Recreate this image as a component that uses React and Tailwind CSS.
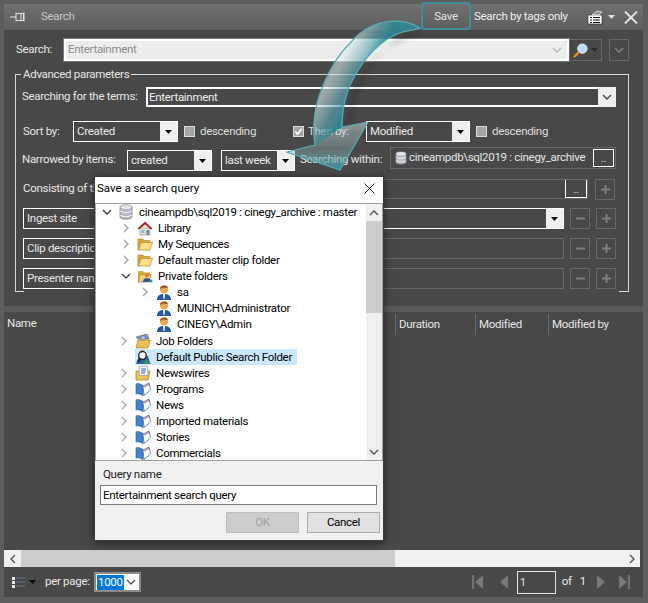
const font = { fontFamily: 'Roboto, "Liberation Sans", sans-serif' };

const treeRows = [
  { label: 'cineampdb\\sql2019 : cinegy_archive : master', level: 'pl-[6px]', chevron: 'down', icon: 'db' },
  { label: 'Library', level: 'pl-[25px]', chevron: 'right', icon: 'home' },
  { label: 'My Sequences', level: 'pl-[25px]', chevron: 'right', icon: 'folder' },
  { label: 'Default master clip folder', level: 'pl-[25px]', chevron: 'right', icon: 'folder' },
  { label: 'Private folders', level: 'pl-[25px]', chevron: 'down', icon: 'private' },
  { label: 'sa', level: 'pl-[44px]', chevron: 'right', icon: 'user' },
  { label: 'MUNICH\\Administrator', level: 'pl-[44px]', icon: 'user' },
  { label: 'CINEGY\\Admin', level: 'pl-[44px]', icon: 'user' },
  { label: 'Job Folders', level: 'pl-[23px] mt-px', chevron: 'right', icon: 'job' },
  { label: 'Default Public Search Folder', level: 'pl-[23px]', icon: 'search', selected: true },
  { label: 'Newswires', level: 'pl-[23px]', chevron: 'right', icon: 'news' },
  { label: 'Programs', level: 'pl-[23px]', chevron: 'right', icon: 'book' },
  { label: 'News', level: 'pl-[23px]', chevron: 'right', icon: 'book' },
  { label: 'Imported materials', level: 'pl-[23px]', chevron: 'right', icon: 'book' },
  { label: 'Stories', level: 'pl-[23px]', chevron: 'right', icon: 'book' },
  { label: 'Commercials', level: 'pl-[23px]', chevron: 'right', icon: 'book' },
];

const Chevron = ({ dir = 'down', color = '#555', className = '' }) => (
  <svg viewBox="0 0 10 10" className={`w-[10px] h-[10px] ${className}`} fill="none" stroke={color} strokeWidth="1.4">
    {dir === 'down' && <path d="M1 3l4 4 4-4" />}
    {dir === 'right' && <path d="M3 1l4 4-4 4" />}
    {dir === 'up' && <path d="M1 7l4-4 4 4" />}
    {dir === 'left' && <path d="M7 1L3 5l4 4" />}
  </svg>
);

const DbIcon = ({ className = 'w-[14px] h-[16px]' }) => (
  <svg viewBox="0 0 14 16" className={className}>
    <path d="M1 3c0-3 12-3 12 0v10c0 3-12 3-12 0z" fill="#b9b9c4" stroke="#77777f" strokeWidth=".7" />
    <ellipse cx="7" cy="3" rx="5.5" ry="2" fill="#e4e4ea" />
    <path d="M1 7c2 2 10 2 12 0M1 11c2 2 10 2 12 0" fill="none" stroke="#f2f2f5" strokeWidth="1" />
  </svg>
);

const FolderIcon = () => (
  <svg viewBox="0 0 16 16" className="w-4 h-4">
    <path d="M1 3h5l1 1.500h6v2H4l-2 7.500H1z" fill="#d9a93c" stroke="#a67c1e" strokeWidth=".6" />
    <path d="M4 6.500h11.500L13 14H1.500z" fill="#fbdf8b" stroke="#b58a26" strokeWidth=".7" />
  </svg>
);

const UserIcon = ({ className = 'w-4 h-4' }) => (
  <svg viewBox="0 0 16 16" className={className}>
    <path d="M1 16c0-5 3-6 7-6s7 1 7 6z" fill="#2a5aa8" />
    <path d="M7 10h2l-.4 5h-1.200z" fill="#e6eefa" />
    <circle cx="8" cy="5.500" r="4" fill="#eda24e" />
    <path d="M4 5c0-4 7-5 8-1-2-.5-5-1-8 1z" fill="#8a4a12" />
  </svg>
);

const BookIcon = () => (
  <svg viewBox="0 0 16 16" className="w-4 h-4">
    <path d="M1 3c2-1 5-.5 7 2v10c-2-2-5-2.500-7-2z" fill="#3f86cf" stroke="#2a5d9c" strokeWidth=".6" />
    <path d="M8 5l6-3 1.500 7L9 14.500z" fill="#fff" stroke="#3b6aa8" strokeWidth=".8" />
    <path d="M9 6l5-2.500" stroke="#b5404a" strokeWidth=".9" />
  </svg>
);

const TreeIcon = ({ name }) => {
  if (name === 'db') return <DbIcon />;
  if (name === 'folder') return <FolderIcon />;
  if (name === 'user') return <UserIcon />;
  if (name === 'book') return <BookIcon />;
  if (name === 'home')
    return (
      <svg viewBox="0 0 16 16" className="w-4 h-4">
        <path d="M3 8h10v7H3z" fill="#e9e3d4" stroke="#8e8a7d" strokeWidth=".6" />
        <path d="M.500 8.500L8 1.500l7.500 7-1.500 1L8 4.500 2 9.500z" fill="#b3262b" />
        <path d="M9.500 10h2.500v5H9.500z" fill="#5f88b8" />
        <path d="M4.500 10h3v3h-3z" fill="#8fb7dd" />
      </svg>
    );
  if (name === 'private')
    return (
      <svg viewBox="0 0 16 16" className="w-4 h-4">
        <path d="M1 3h5l1 1.500h6v2H4l-2 7.500H1z" fill="#d9a93c" />
        <path d="M3 6.500h11L12 14H1z" fill="#f4cf72" stroke="#a67c1e" strokeWidth=".7" />
        <circle cx="10" cy="7" r="2.300" fill="#d48b3d" />
        <path d="M6 14c0-3 2-4 4-4s4 1 4 4z" fill="#2a5aa8" />
        <circle cx="14" cy="13" r="1.500" fill="#35a04a" />
      </svg>
    );
  if (name === 'job')
    return (
      <svg viewBox="0 0 16 16" className="w-4 h-4">
        <path d="M1 4l11-3 2 5H3z" fill="#7f97b5" stroke="#4f6580" strokeWidth=".6" />
        <circle cx="8" cy="5" r="2.500" fill="#a9bfd8" stroke="#53677f" strokeWidth=".6" />
        <path d="M3 7h12.500L13 15H1z" fill="#e9bf5c" stroke="#a67c1e" strokeWidth=".7" />
      </svg>
    );
  if (name === 'search')
    return (
      <svg viewBox="0 0 16 16" className="w-4 h-4">
        <path d="M1 15l3-8h9l2.500 8z" fill="#2f62ad" />
        <path d="M11 10l4.500 5H9z" fill="#3d9a45" />
        <path d="M4 3l3-2 3 1-2 2z" fill="#a8662a" />
        <circle cx="7.500" cy="6.500" r="3.800" fill="#fff" stroke="#1d1d1d" strokeWidth="1.300" />
        <path d="M5 10l-2 3" stroke="#1d1d1d" strokeWidth="1.600" />
      </svg>
    );
  return (
    <svg viewBox="0 0 16 16" className="w-4 h-4">
      <path d="M1 6h14l-2 9H1z" fill="#efc15d" stroke="#a67c1e" strokeWidth=".7" />
      <path d="M4 1.500l8.500-.5.500 9-8.500.5z" fill="#fff" stroke="#6d86a6" strokeWidth=".6" />
      <path d="M6 4h5M6 6h5M6 8h4" stroke="#2a64b0" strokeWidth="1" />
    </svg>
  );
};

const Caret = ({ color = '#000' }) => (
  <svg viewBox="0 0 7 4" className="w-[7px] h-1">
    <path d="M0 0h7L3.500 4z" fill={color} />
  </svg>
);

const Combo = ({ label, className = '' }) => (
  <div className={`flex h-[21px] border border-white text-[#e8e8e8] ${className}`}>
    <span className="flex-1 truncate pl-[3px] leading-[19px]">{label}</span>
    <span className="w-[17px] bg-[#efefef] flex items-center justify-center">
      <Caret />
    </span>
  </div>
);

const Checkbox = ({ checked, className = '' }) => (
  <span className={`flex items-center justify-center w-[11px] h-[11px] bg-[#a5a5a5] border border-[#dcdcdc] shrink-0 ${className}`}>
    {checked && (
      <svg viewBox="0 0 10 10" className="w-[9px] h-[9px]" fill="none" stroke="#fff" strokeWidth="1.800">
        <path d="M1.500 5l2.500 3 4.500-6" />
      </svg>
    )}
  </span>
);

const MiniButton = ({ sign }) => (
  <span className="flex items-center justify-center w-5 h-[21px] border border-[#666] text-[#7f7f7f]">
    <svg viewBox="0 0 9 9" className="w-[9px] h-[9px]">
      <path d={sign === '+' ? 'M0 3.500h9v2H0zM3.500 0h2v9h-2z' : 'M0 3.500h9v2H0z'} fill="currentColor" />
    </svg>
  </span>
);

const DotsButton = ({ className = '' }) => (
  <span className={`flex items-end justify-center border border-white text-[#e0e0e0] leading-[15px] ${className}`}>..</span>
);

// the white part of the box stays behind the dialog, only Ingest site is active to the right
const ParamField = ({ label, active }) => (
  <div className="flex items-center mt-[9px] h-[21px]">
    {active ? (
      <div className="w-[541px] ml-[7px] h-[21px] border border-white flex items-center pl-[3px]">
        <span className="flex-1">{label}</span>
        <span className="w-[17px] h-full bg-[#efefef] flex items-center justify-center"><Caret /></span>
      </div>
    ) : (
      <div className="w-[541px] ml-[7px] h-[21px] border border-[#666] flex items-center">
        <span className="w-[200px] -my-px -ml-px h-[21px] border border-white pl-[3px] leading-[19px]">{label}</span>
      </div>
    )}
    <span className="ml-[6px]"><MiniButton sign="-" /></span>
    <span className="ml-[6px]"><MiniButton sign="+" /></span>
  </div>
);

const PagerIcon = ({ d }) => (
  <svg viewBox="0 0 12 14" className="w-3 h-[14px]">
    <path d={d} fill="#7a7a7a" stroke="#5d5d5d" strokeWidth=".5" />
  </svg>
);

const CurveArrow = () => (
  <svg viewBox="0 0 648 603" className="absolute inset-0 w-[648px] h-[603px] pointer-events-none">
    <defs>
      <linearGradient id="arrowFill" gradientUnits="userSpaceOnUse" x1="315" y1="60" x2="360" y2="85">
        <stop offset="0" stopColor="#e6f4f5" stopOpacity=".3" />
        <stop offset=".45" stopColor="#dfe9ea" stopOpacity=".6" />
        <stop offset=".8" stopColor="#5aa7b2" stopOpacity=".65" />
        <stop offset="1" stopColor="#2f8695" stopOpacity=".9" />
      </linearGradient>
      <linearGradient id="headFill" gradientUnits="userSpaceOnUse" x1="330" y1="125" x2="330" y2="170">
        <stop offset="0" stopColor="#dfe9ea" stopOpacity=".5" />
        <stop offset=".55" stopColor="#9cc9d0" stopOpacity=".3" />
        <stop offset="1" stopColor="#2f8b9b" stopOpacity=".95" />
      </linearGradient>
      <filter id="arrowBlur" x="-20%" y="-20%" width="140%" height="140%">
        <feGaussianBlur stdDeviation="3" />
      </filter>
    </defs>
    <path
      d="M420 28C400 34 376 42 357 72C346 90 342 108 342 127L368 122L345 135C340 110 355 60 400 30Z"
      transform="translate(5 3)"
      fill="#000"
      opacity=".3"
      filter="url(#arrowBlur)"
    />
    {/* shaft */}
    <path
      d="M420 28C408 20 392 20 380 23C366 27 358 34 353 40C338 54 328 72 322 88C314 108 312 126 315 145L342 127C342 108 347 88 357 72C370 50 388 36 403 32C410 30 416 30 420 28Z"
      fill="url(#arrowFill)"
    />
    {/* head */}
    <path d="M315 145L287 152L340 170L368 122L342 127Z" fill="url(#headFill)" />
    <path
      d="M420 28C408 20 392 20 380 23C366 27 358 34 353 40C338 54 328 72 322 88C314 108 312 126 315 145L287 152L340 170L368 122L342 127C342 108 347 88 357 72C370 50 388 36 403 32C410 30 416 30 420 28Z"
      fill="none"
      stroke="#55aab6"
      strokeWidth="1.200"
    />
  </svg>
);

const SaveDialog = () => (
  <div className="absolute left-[94px] top-[176px] w-[290px] h-[365px] bg-[#f0f0f0] border border-[#3a3a3a] flex flex-col text-black shadow-[0_2px_8px_rgba(0,0,0,0.5)]">
    <div className="h-[26px] shrink-0 bg-white flex items-center pl-[2px] pr-[8px] pb-[3px] justify-between">
      <span className="tracking-normal">Save a search query</span>
      <svg viewBox="0 0 11 11" className="w-[11px] h-[11px]" fill="none" stroke="#222" strokeWidth="1">
        <path d="M.5.5l10 10M10.500.5l-10 10" />
      </svg>
    </div>
    <div className="h-[258px] shrink-0 bg-white border border-[#a0a0a0] flex overflow-hidden">
      <div className="flex-1 overflow-hidden">
        {treeRows.map((row) => (
          <div key={row.label} className={`flex items-center h-4 ${row.level}`}>
            <span className="w-[14px] shrink-0 flex items-center">
              {row.chevron === 'down' && <Chevron dir="down" color="#444" />}
              {row.chevron === 'right' && <Chevron dir="right" color="#a5a5a5" />}
            </span>
            <div className={`ml-[2px] flex items-center h-4 ${row.selected ? 'bg-[#cce8ff] w-[162px]' : ''}`}>
              <span className="shrink-0 w-4 flex justify-center"><TreeIcon name={row.icon} /></span>
              <span className="ml-[5px] whitespace-nowrap leading-[16px]">{row.label}</span>
            </div>
          </div>
        ))}
      </div>
      <div className="w-[16px] shrink-0 bg-[#f0f0f0] flex flex-col items-center">
        <div className="h-[17px] flex items-center"><Chevron dir="up" color="#555" /></div>
        <div className="w-full h-[92px] bg-[#cdcdcd]" />
        <div className="flex-1" />
        <div className="h-[17px] flex items-center"><Chevron dir="down" color="#555" /></div>
      </div>
    </div>
    <div className="flex-1 pl-[5px] pr-[3px] pt-[6px] flex flex-col">
      <span className="pl-[3px] leading-[14px] text-[#222]">Query name</span>
      <div className="mt-[4px] w-[277px] h-[20px] bg-white border border-[#7a7a7a] pl-[2px] leading-[18px]">Entertainment search query</div>
      <div className="mt-[7px] flex justify-end gap-[8px]">
        <span className="w-[73px] h-[21px] bg-[#cccccc] border border-[#bfbfbf] text-[#a2a2a2] flex items-center justify-center">OK</span>
        <span className="w-[73px] h-[21px] bg-[#e1e1e1] border border-[#adadad] flex items-center justify-center">Cancel</span>
      </div>
    </div>
  </div>
);

export default function App() {
  return (
    <div style={font} className="relative w-[648px] h-[603px] overflow-hidden bg-[#5d5d5d] text-[11.5px] tracking-[-0.3px] text-[#e6e6e6] p-[4px] pr-[5px] pb-[6px]">
      <div className="h-full flex flex-col bg-[#484848]">
        {/* Title bar */}
        <div className="h-[26px] shrink-0 flex items-center bg-gradient-to-b from-[#707070] to-[#5e5e5e] pl-[6px] pr-[5px] text-[#c9c9c9]">
          <svg viewBox="0 0 16 10" className="w-4 h-[10px]" fill="none" stroke="#e6e6e6" strokeWidth="1">
            <path d="M0 5h6M6 .5v9M6.500 1.500h7v7h-7M11 1.500v7M14 .5v9" />
          </svg>
          <span className="ml-[15px] text-[#c6c6c6]">Search</span>
          <div className="ml-auto flex items-center self-start h-[28px] -mt-[2px] pt-[1px] w-[50px] justify-center border-2 border-[#3f8e9c] rounded-[4px] text-[#e2e2e2]">Save</div>
          <span className="ml-[3px] text-[#efefef] w-[113px]">Search by tags only</span>
          <svg viewBox="0 0 16 15" className="w-4 h-[15px]">
            <path d="M1 5h14v9H1z" fill="#fff" stroke="#222" strokeWidth=".6" />
            <path d="M5 5l5-4 5 1-3 3z" fill="#8d8d8d" stroke="#eee" strokeWidth=".8" />
            <path d="M3 7.500h2M6 7.500h7M3 10h2M6 10h7M3 12.500h2M6 12.500h7" stroke="#111" strokeWidth="1" />
          </svg>
          <span className="ml-[5px]"><Caret color="#dcdcdc" /></span>
          <svg viewBox="0 0 14 13" className="w-[14px] h-[13px] ml-[9px]" fill="none" stroke="#e8e8e8" strokeWidth="1.800">
            <path d="M1 .5l12 12M13 .5l-12 12" />
          </svg>
        </div>

        {/* Search row */}
        <div className="mt-[9px] h-[22px] shrink-0 flex items-center pl-[12px]">
          <span className="w-[48px]">Search:</span>
          <div className="w-[505px] h-[22px] border-2 border-white outline outline-1 outline-[#7a7a7a] bg-[#ededed] text-[#8b8b8b] flex items-center justify-between pl-[2px] pr-[5px]">
            <span>Entertainment</span>
            <Chevron dir="down" color="#b5b5b5" />
          </div>
          <div className="w-[33px] h-[22px] border border-[#666] flex items-center justify-center gap-[3px]">
            <svg viewBox="0 0 16 16" className="w-[15px] h-[15px]">
              <path d="M1 15l5-5" stroke="#d89a2c" strokeWidth="2.400" />
              <circle cx="10" cy="6" r="5" fill="#bcdcf7" stroke="#e8eef5" strokeWidth="1" />
            </svg>
            <Caret color="#2c2c2c" />
          </div>
          <div className="ml-[7px] w-[20px] h-[22px] border border-[#666] flex items-center justify-center">
            <Chevron dir="down" color="#858585" />
          </div>
        </div>

        {/* Advanced parameters */}
        <fieldset className="mt-[6px] ml-[11px] w-[614px] shrink-0 border border-b-0 border-[#d8d8d8] px-0 min-w-0">
          <legend className="ml-[5px] px-[2px] h-[14px] leading-[14px]">Advanced parameters</legend>

          <div className="mt-[6px] ml-[6px] flex items-center h-[20px]">
            <span className="w-[124px] whitespace-nowrap">Searching for the terms:</span>
            <div className="w-[470px] h-[20px] border-2 border-white border-r-0 flex justify-between">
              <span className="pl-[1px] leading-[16px] text-[#eee]">Entertainment</span>
              <span className="w-[18px] -my-[2px] bg-[#efefef] flex items-center justify-center"><Chevron dir="down" color="#444" /></span>
            </div>
          </div>

          <div className="mt-[14px] flex items-center h-[21px]">
            <span className="ml-[7px] w-[50px]">Sort by:</span>
            <Combo label="Created" className="w-[105px]" />
            <Checkbox className="ml-[6px]" />
            <span className="ml-[5px] w-[57px] text-[#dedede]">descending</span>
            <Checkbox checked className="ml-[36px]" />
            <span className="ml-[4px] w-[58px] text-[#dedede]">Then by:</span>
            <Combo label="Modified" className="w-[104px]" />
            <Checkbox className="ml-[6px]" />
            <span className="ml-[5px] text-[#dedede]">descending</span>
          </div>

          <div className="mt-[5px] flex items-start h-[24px]">
            <span className="ml-[6px] mt-[4px] w-[105px] whitespace-nowrap">Narrowed by items:</span>
            <Combo label="created" className="w-[85px] mt-[3px]" />
            <Combo label="last week" className="ml-[9px] w-[74px] mt-[3px]" />
            <span className="ml-[5px] mt-[4px] w-[90px] whitespace-nowrap">Searching within:</span>
            <div className="w-[226px] h-[22px] border border-[#666] flex items-center pl-[4px]">
              <DbIcon className="w-[12px] h-[14px]" />
              <span className="ml-[2px] flex-1 whitespace-nowrap">cineampdb\sql2019 : cinegy_archive</span>
              <DotsButton className="w-[21px] h-[18px] mr-[1px]" />
            </div>
          </div>

          <div className="mt-[8px] flex items-center h-[20px]">
            <span className="ml-[7px] w-[60px] whitespace-nowrap">Consisting of the</span>
            <div className="ml-[300px] w-[205px] h-[20px] border border-[#666] flex justify-end">
              <DotsButton className="w-[22px] h-[18px] border-t-0" />
            </div>
            <span className="ml-[7px]"><MiniButton sign="+" /></span>
          </div>

          <ParamField label="Ingest site" active />
          <ParamField label="Clip description" />
          <ParamField label="Presenter name" />

          <div className="mt-[2px] flex justify-between">
            <span className="w-[8px] h-px bg-[#d8d8d8]" />
            <span className="w-[9px] h-px bg-[#d8d8d8]" />
          </div>
        </fieldset>

        {/* Results list */}
        <div className="mt-[14px] h-[6px] shrink-0 bg-[#595959]" />
        <div className="flex-1 flex flex-col min-h-0 mr-[3px]">
          <div className="h-[23px] shrink-0 flex items-center pt-[1px]">
            <span className="pl-[3px] w-[391px]">Name</span>
            <span className="w-[80px] h-[21px] border-l border-[#6a6a6a] pl-[3px] leading-[21px]">Duration</span>
            <span className="w-[73px] h-[21px] border-l border-[#6a6a6a] pl-[3px] leading-[21px]">Modified</span>
            <span className="h-[21px] border-l border-[#6a6a6a] pl-[3px] leading-[21px]">Modified by</span>
          </div>
          <div className="flex-1" />
          <div className="h-[17px] shrink-0 flex bg-[#f0f0f0]">
            <span className="w-[17px] flex items-center justify-center"><Chevron dir="left" color="#555" /></span>
            <span className="w-[374px] bg-[#cdcdcd]" />
            <span className="flex-1" />
            <span className="w-[17px] flex items-center justify-center"><Chevron dir="right" color="#555" /></span>
          </div>
        </div>

        {/* Footer */}
        <div className="h-[30px] shrink-0 flex items-center pl-[8px] pr-[13px]">
          <svg viewBox="0 0 14 11" className="w-[14px] h-[11px]">
            <path d="M0 0h3v3H0zM0 4h3v3H0zM0 8h3v3H0z" fill="#e8e8e8" />
            <path d="M4 1h9M4 5h9M4 9h9" stroke="#6b7a90" strokeWidth="1.200" />
          </svg>
          <span className="ml-[3px]"><Caret /></span>
          <span className="ml-[9px] w-[49px] text-[#e8e8e8]">per page:</span>
          <div className="w-[47px] h-[20px] bg-white border-2 border-[#8a8a8a] flex items-center">
            <span className="ml-[1px] bg-[#0078d7] text-white px-[1px] leading-[15px]">1000</span>
            <span className="ml-auto mr-[3px]"><Chevron dir="down" color="#555" /></span>
          </div>
          <div className="ml-auto flex items-center">
            <PagerIcon d="M0 0h2v14H0zM11 0v14L3 7z" />
            <span className="ml-[13px]"><PagerIcon d="M11 0v14L3 7z" /></span>
            <div className="ml-[8px] w-[39px] h-[23px] border border-[#e4e4e4] pl-[2px] leading-[21px] text-[#ddd]">1</div>
            <span className="ml-[6px] text-[#e8e8e8]">of</span>
            <span className="ml-[8px] text-[#e8e8e8]">1</span>
            <span className="ml-[10px]"><PagerIcon d="M1 0v14L9 7z" /></span>
            <span className="ml-[10px]"><PagerIcon d="M1 0v14L9 7zM10 0h2v14h-2z" /></span>
          </div>
        </div>
      </div>

      <SaveDialog />
      <CurveArrow />
    </div>
  );
}
